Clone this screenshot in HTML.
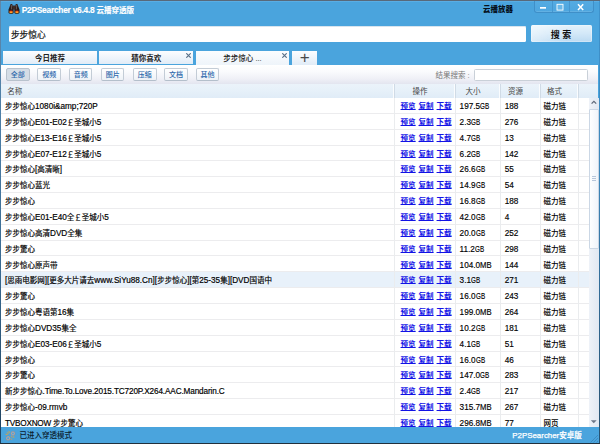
<!DOCTYPE html><html lang="zh-CN"><head><meta charset="utf-8"><title>P2PSearcher</title><style>
*{margin:0;padding:0;box-sizing:border-box}
html,body{width:600px;height:444px;overflow:hidden;background:#4aa4dd;font-family:"Liberation Sans","Noto Sans CJK SC",sans-serif;font-size:7.5px;color:#000}
body{position:relative}
.l{font-size:8.2px}
#topedge{position:absolute;left:0;top:0;width:600px;height:2px;background:linear-gradient(#58697a 0,#58697a 45%,#5db0e5 55%,#55aae2 100%)}
#leftedge{position:absolute;left:0;top:1px;width:1.4px;height:443px;background:linear-gradient(#5f88aa,#4a7da6 30%,#386a92 60%,#1e415e)}
#rightedge{position:absolute;left:598.6px;top:1px;width:1.4px;height:443px;background:linear-gradient(#3f93cd,#3c85b8 40%,#2f6690 70%,#25506f)}
#icon{position:absolute;left:8px;top:3px;width:12px;height:12px}
#title{position:absolute;left:21.7px;top:3.7px;height:12px;line-height:12px;font-size:7.5px;font-weight:bold;color:#fff;white-space:nowrap;-webkit-text-stroke:0.15px #fff}
#title .l{font-size:8.4px;letter-spacing:-0.25px}
#cloud{position:absolute;left:483px;top:4.1px;height:12px;line-height:12px;font-size:7.5px;font-weight:900;color:#06121d;white-space:nowrap}
#wbtn{position:absolute;left:534px;top:0.9px;width:59.5px;height:12px;background:linear-gradient(#55abe2,#4da6df);border:1px solid #3f8fc8;border-top:none;border-radius:0 0 3px 3px;box-shadow:inset 0 -1px 0 rgba(255,255,255,.12)}
#wbtn i{position:absolute;top:0;width:1px;height:11px;background:#4596cf}
#search{position:absolute;left:8.9px;top:25.5px;width:517.3px;height:16.8px;background:#fff;border-radius:1.5px;font-size:8.7px;line-height:19.4px;-webkit-text-stroke:0.2px #111;overflow:hidden;padding-left:2px;color:#111;box-shadow:inset 0 1px 0 #d8e4ee}
#sbtn{position:absolute;left:530.5px;top:24.7px;width:61px;height:17.6px;border-radius:1.5px;background:linear-gradient(100deg,rgba(255,255,255,.5),rgba(255,255,255,0) 60%),linear-gradient(#e4f2fb,#d3e8f8 50%,#bcdaf2);box-shadow:inset 0 0 0 0.6px rgba(255,255,255,.55);font-size:9px;line-height:20.7px;text-align:center;color:#111;font-weight:bold;word-spacing:0px}
#content{position:absolute;left:1.4px;top:64.8px;width:596.9px;height:363px;background:#fff}
.tab{position:absolute;top:51px;height:12.7px;background:linear-gradient(#fcfdff,#e1ecf7);text-align:center;line-height:15px;font-size:7.5px;font-weight:bold;color:#222}
.tab.act{background:linear-gradient(#fbfdfe,#eef4fa);font-weight:500;height:14px}
.tab svg{position:absolute;right:1.9px;top:1.5px;width:5px;height:5px}
#filter{position:absolute;left:1.4px;top:64.8px;width:597.1px;height:19.2px;background:linear-gradient(#ffffff,#fafbfd 35%,#eeeff6 75%,#e3e5ef)}
.fb{position:absolute;top:68px;width:23.7px;height:13px;border:1px solid #c3ccd6;border-bottom-color:#b4bfcb;font-weight:500;border-radius:2px;background:linear-gradient(#ffffff,#eef2f7);font-size:7px;line-height:11.5px;text-align:center;color:#2a66aa}
.fb.on{background:#d5dde6;border-color:#b8c2cd}
#rlabel{position:absolute;left:435.5px;top:69px;height:13px;line-height:13px;font-size:7.5px;color:#777;white-space:nowrap}
#rinput{position:absolute;left:473.5px;top:68.5px;width:114px;height:12px;border:1px solid #c9d0d8;border-radius:1.5px;background:#fff}
#thead{position:absolute;left:1.4px;top:84px;width:596.9px;height:14px;background:linear-gradient(#ebf3fa,#e6f0f9 50%,#e0ecf7)}
.th{position:absolute;top:84.7px;height:14px;line-height:14px;font-size:7.5px;color:#444;white-space:nowrap}
.vs{position:absolute;top:84px;width:1px;height:14px;background:#d0dbe6;box-shadow:-1px 0 0 #fafcfe}
.row{position:absolute;left:1.4px;width:587.6px;height:15.85px;border-bottom:1px solid #ececee;line-height:17.4px;white-space:nowrap;background:#fff}
.row.hl{background:#e8f1fa}
.c{position:absolute;top:0;height:15px}
.n{left:3.6px;-webkit-text-stroke:0.18px #000}
.op{left:399.2px;color:#1212e6;font-weight:bold;word-spacing:0.9px}
.op a{text-decoration:underline;text-underline-offset:0.2px;text-decoration-thickness:0.8px}
.sz{left:458.2px;font-size:8.2px;-webkit-text-stroke:0.15px #000}
.u{display:inline-block;font-size:8.2px;transform-origin:0 50%;transform:scaleX(.94)}
.u.g{transform:scaleX(.77)}
.rs{left:503.3px;font-size:8.2px;-webkit-text-stroke:0.15px #000}
.fm{left:542.1px;font-weight:500}
.cv{position:absolute;top:98px;width:1px;height:329px;background:#eaecee}
#sb{position:absolute;left:589px;top:98px;width:9.5px;height:329px;background:linear-gradient(90deg,#eef2f8,#e1e8f2)}
#sbthumb{position:absolute;left:589px;top:108.5px;width:9.5px;height:140.5px;border:1px solid #cbd7e5;border-radius:1px;background:linear-gradient(90deg,#fdfeff,#f0f4fa)}
#status{position:absolute;left:1px;top:426.9px;width:598px;height:16.1px;background:#4aa4dd}
#botedge{position:absolute;left:0;top:443px;width:600px;height:1px;background:#22303c}
#stl{position:absolute;left:19.5px;top:430.3px;height:12px;line-height:12px;font-size:7.5px;font-weight:500;color:#0a1c2e;white-space:nowrap}
#str{position:absolute;left:512.3px;top:429.9px;height:12px;line-height:12px;font-size:7.5px;color:#fff;font-weight:500;white-space:nowrap}
.tab.plus{font-weight:normal;font-size:17px;line-height:14px;color:#4a4a4a;height:13.9px}
#str .l{font-size:7.9px}
#str{-webkit-text-stroke:0.25px #fff}

</style></head><body>
<div id="topedge"></div><div id="leftedge"></div><div id="rightedge"></div>
<svg id="icon" viewBox="0 0 12 12">
<defs><linearGradient id="lg" x1="0" y1="0" x2="0" y2="1"><stop offset="0" stop-color="#d8200f"/><stop offset="0.45" stop-color="#ff7a1a"/><stop offset="1" stop-color="#ffc83a"/></linearGradient></defs>
<path d="M2.6 1 L4.2 1 L5.6 6.6 L5.6 10 Q3.2 11.8 0.5 10 L0.5 6.8 Z" fill="#2b1d19"/>
<path d="M7.8 1 L9.4 1 L11.5 6.8 L11.5 10 Q8.8 11.8 6.4 10 L6.4 6.6 Z" fill="#2b1d19"/>
<path d="M4.4 2.6 L7.6 2.6 L7.2 6.4 L4.8 6.4 Z" fill="#3b2b27"/>
<ellipse cx="3.05" cy="8.9" rx="1.75" ry="1.45" fill="url(#lg)"/>
<ellipse cx="8.95" cy="8.9" rx="1.75" ry="1.45" fill="url(#lg)"/>
<path d="M3.3 1.8 L3.6 6.4" stroke="#8d7d78" stroke-width="0.6"/><path d="M8.7 1.8 L8.4 6.4" stroke="#8d7d78" stroke-width="0.6"/>
</svg>
<div id="title"><span class="l">P2PSearcher v6.4.8 </span>云播穿透版</div>
<div id="cloud">云播放器</div>
<div id="wbtn"><i style="left:17px"></i><i style="left:34px"></i>
<svg style="position:absolute;left:0;top:0" width="58" height="12" viewBox="0 0 58 12">
<rect x="5" y="6" width="6" height="1.7" fill="#fff"/>
<rect x="22" y="3.3" width="6" height="5.8" fill="#6ab8e8" stroke="#fff" stroke-width="0.9"/>
<path d="M43 3.2 L48.2 9 M48.2 3.2 L43 9" stroke="#fff" stroke-width="1.5" fill="none"/>
</svg></div>
<div id="search">步步惊心</div>
<div id="sbtn">搜 索</div>
<div class="tab" style="left:3px;width:93.8px">今日推荐</div>
<div class="tab" style="left:99.2px;width:94px">猜你喜欢<svg viewBox="0 0 5 5"><path d="M0.3 0.3L4.7 4.7M4.7 0.3L0.3 4.7" stroke="#587088" stroke-width="1.15"/></svg></div>
<div class="tab act" style="left:195.7px;width:93.7px">步步惊心 ...<svg viewBox="0 0 5 5"><path d="M0.3 0.3L4.7 4.7M4.7 0.3L0.3 4.7" stroke="#587088" stroke-width="1.15"/></svg></div>
<div class="tab plus" style="left:292px;width:25.4px">+</div>
<div id="content"></div>
<div id="filter"></div>
<div class="fb on" style="left:6px">全部</div>
<div class="fb" style="left:37.3px">视频</div>
<div class="fb" style="left:68.8px">音频</div>
<div class="fb" style="left:100.8px">图片</div>
<div class="fb" style="left:133px">压缩</div>
<div class="fb" style="left:164.2px">文档</div>
<div class="fb" style="left:195.7px">其他</div>
<div id="rlabel">结果搜索 :</div><div id="rinput"></div>
<div id="thead"></div>
<div class="th" style="left:7.3px">名称</div>
<div class="th" style="left:412.5px">操作</div>
<div class="th" style="left:465.5px">大小</div>
<div class="th" style="left:508px">资源</div>
<div class="th" style="left:547px">格式</div>
<div class="vs" style="left:394px"></div><div class="vs" style="left:455px"></div><div class="vs" style="left:500px"></div><div class="vs" style="left:539.5px"></div><div class="vs" style="left:578px"></div>

<div id="rows">
<div class="row" style="top:98.00px"><span class="c n">步步惊心<span class="l">1080i&amp;amp;720P</span></span><span class="c op"><a>预览</a> <a>复制</a> <a>下载</a></span><span class="c sz">197.5<span class="u g">GB</span></span><span class="c rs">188</span><span class="c fm">磁力链</span></div>
<div class="row" style="top:113.85px"><span class="c n">步步惊心<span class="l">E01-E02</span>￡圣城小<span class="l">5</span></span><span class="c op"><a>预览</a> <a>复制</a> <a>下载</a></span><span class="c sz">2.3<span class="u g">GB</span></span><span class="c rs">276</span><span class="c fm">磁力链</span></div>
<div class="row" style="top:129.70px"><span class="c n">步步惊心<span class="l">E13-E16</span>￡圣城小<span class="l">5</span></span><span class="c op"><a>预览</a> <a>复制</a> <a>下载</a></span><span class="c sz">4.7<span class="u g">GB</span></span><span class="c rs">13</span><span class="c fm">磁力链</span></div>
<div class="row" style="top:145.55px"><span class="c n">步步惊心<span class="l">E07-E12</span>￡圣城小<span class="l">5</span></span><span class="c op"><a>预览</a> <a>复制</a> <a>下载</a></span><span class="c sz">6.2<span class="u g">GB</span></span><span class="c rs">142</span><span class="c fm">磁力链</span></div>
<div class="row" style="top:161.40px"><span class="c n">步步惊心<span class="l">[</span>高清晰<span class="l">]</span></span><span class="c op"><a>预览</a> <a>复制</a> <a>下载</a></span><span class="c sz">26.6<span class="u g">GB</span></span><span class="c rs">55</span><span class="c fm">磁力链</span></div>
<div class="row" style="top:177.25px"><span class="c n">步步惊心蓝光</span><span class="c op"><a>预览</a> <a>复制</a> <a>下载</a></span><span class="c sz">14.9<span class="u g">GB</span></span><span class="c rs">54</span><span class="c fm">磁力链</span></div>
<div class="row" style="top:193.10px"><span class="c n">步步惊心</span><span class="c op"><a>预览</a> <a>复制</a> <a>下载</a></span><span class="c sz">16.8<span class="u g">GB</span></span><span class="c rs">188</span><span class="c fm">磁力链</span></div>
<div class="row" style="top:208.95px"><span class="c n">步步惊心<span class="l">E01-E40</span>全￡圣城小<span class="l">5</span></span><span class="c op"><a>预览</a> <a>复制</a> <a>下载</a></span><span class="c sz">42.0<span class="u g">GB</span></span><span class="c rs">4</span><span class="c fm">磁力链</span></div>
<div class="row" style="top:224.80px"><span class="c n">步步惊心高清<span class="l">DVD</span>全集</span><span class="c op"><a>预览</a> <a>复制</a> <a>下载</a></span><span class="c sz">20.0<span class="u g">GB</span></span><span class="c rs">252</span><span class="c fm">磁力链</span></div>
<div class="row" style="top:240.65px"><span class="c n">步步驚心</span><span class="c op"><a>预览</a> <a>复制</a> <a>下载</a></span><span class="c sz">11.2<span class="u g">GB</span></span><span class="c rs">298</span><span class="c fm">磁力链</span></div>
<div class="row" style="top:256.50px"><span class="c n">步步惊心原声带</span><span class="c op"><a>预览</a> <a>复制</a> <a>下载</a></span><span class="c sz">104.0<span class="u">MB</span></span><span class="c rs">144</span><span class="c fm">磁力链</span></div>
<div class="row hl" style="top:272.35px"><span class="c n"><span class="l">[</span>思雨电影网<span class="l">][</span>更多大片请去<span class="l">www.SiYu88.Cn][</span>步步惊心<span class="l">][</span>第<span class="l">25-35</span>集<span class="l">][DVD</span>国语中</span><span class="c op"><a>预览</a> <a>复制</a> <a>下载</a></span><span class="c sz">3.1<span class="u g">GB</span></span><span class="c rs">271</span><span class="c fm">磁力链</span></div>
<div class="row" style="top:288.20px"><span class="c n">步步驚心</span><span class="c op"><a>预览</a> <a>复制</a> <a>下载</a></span><span class="c sz">16.0<span class="u g">GB</span></span><span class="c rs">243</span><span class="c fm">磁力链</span></div>
<div class="row" style="top:304.05px"><span class="c n">步步惊心粤语第<span class="l">16</span>集</span><span class="c op"><a>预览</a> <a>复制</a> <a>下载</a></span><span class="c sz">199.0<span class="u">MB</span></span><span class="c rs">264</span><span class="c fm">磁力链</span></div>
<div class="row" style="top:319.90px"><span class="c n">步步惊心<span class="l">DVD35</span>集全</span><span class="c op"><a>预览</a> <a>复制</a> <a>下载</a></span><span class="c sz">10.2<span class="u g">GB</span></span><span class="c rs">181</span><span class="c fm">磁力链</span></div>
<div class="row" style="top:335.75px"><span class="c n">步步惊心<span class="l">E03-E06</span>￡圣城小<span class="l">5</span></span><span class="c op"><a>预览</a> <a>复制</a> <a>下载</a></span><span class="c sz">4.1<span class="u g">GB</span></span><span class="c rs">51</span><span class="c fm">磁力链</span></div>
<div class="row" style="top:351.60px"><span class="c n">步步惊心</span><span class="c op"><a>预览</a> <a>复制</a> <a>下载</a></span><span class="c sz">16.0<span class="u g">GB</span></span><span class="c rs">46</span><span class="c fm">磁力链</span></div>
<div class="row" style="top:367.45px"><span class="c n">步步驚心</span><span class="c op"><a>预览</a> <a>复制</a> <a>下载</a></span><span class="c sz">147.0<span class="u g">GB</span></span><span class="c rs">283</span><span class="c fm">磁力链</span></div>
<div class="row" style="top:383.30px"><span class="c n">新步步惊心<span class="l" style="letter-spacing:-0.13px">.Time.To.Love.2015.TC720P.X264.AAC.Mandarin.C</span></span><span class="c op"><a>预览</a> <a>复制</a> <a>下载</a></span><span class="c sz">2.4<span class="u g">GB</span></span><span class="c rs">217</span><span class="c fm">磁力链</span></div>
<div class="row" style="top:399.15px"><span class="c n">步步惊心<span class="l">-09.rmvb</span></span><span class="c op"><a>预览</a> <a>复制</a> <a>下载</a></span><span class="c sz">315.7<span class="u">MB</span></span><span class="c rs">267</span><span class="c fm">磁力链</span></div>
<div class="row" style="top:415.00px"><span class="c n"><span class="l" style="letter-spacing:-0.22px">TVBOXNOW </span>步步驚心</span><span class="c op"><a>预览</a> <a>复制</a> <a>下载</a></span><span class="c sz">296.8<span class="u">MB</span></span><span class="c rs">77</span><span class="c fm">网页</span></div>
</div>
<div class="cv" style="left:394px"></div><div class="cv" style="left:455px"></div><div class="cv" style="left:500px"></div><div class="cv" style="left:539.5px"></div><div class="cv" style="left:578px"></div>
<div id="sb"></div><div id="sbthumb"></div>
<svg style="position:absolute;left:589px;top:98px" width="9" height="10" viewBox="0 0 9 10"><path d="M2.6 5.6 L4.9 3.3 L7.2 5.6" fill="none" stroke="#5d6778" stroke-width="1.2"/></svg>
<svg style="position:absolute;left:589px;top:416.5px" width="9" height="10" viewBox="0 0 9 10"><path d="M1.8 3.3 L4.75 6.3 L7.7 3.3 Z" fill="#6d7788"/></svg>
<div style="position:absolute;left:591.5px;top:176px;width:4px;height:1px;background:#b7c6da;box-shadow:0 2px 0 #b7c6da,0 4px 0 #b7c6da"></div>
<div id="status"></div><div id="botedge"></div>
<svg style="position:absolute;left:5px;top:430px" width="11" height="11" viewBox="0 0 11 11">
<g fill="none" stroke="#b3a6a8" stroke-width="1.25"><circle cx="7.95" cy="3.5" r="1.55"/><circle cx="3.1" cy="8.2" r="1.6"/></g>
<g fill="none" stroke="#7d8790" stroke-width="0.35"><circle cx="7.95" cy="3.5" r="2.2"/><circle cx="3.1" cy="8.2" r="2.25"/></g>
<g stroke="#f0a030" stroke-width="0.85" stroke-linecap="round"><path d="M2.2 2.6 L3.4 3.4M3.9 1.3 L4.3 2.6M1 4.3 L2.4 4.4M6.4 6.4 L7.2 7.2M8.6 6.6 L8.9 7.4M6.2 8.8 L6.6 9.4"/></g>
</svg>
<svg style="position:absolute;left:589px;top:434px" width="10" height="9" viewBox="0 0 10 9"><path d="M9 1 L1.5 8.5M9 4 L4.5 8.5M9 7 L7.5 8.5" stroke="#3a86bd" stroke-width="0.8"/></svg>
<div id="stl">已进入穿透模式</div>
<div id="str"><span class="l">P2PSearcher</span>安卓版</div>

</body></html>
